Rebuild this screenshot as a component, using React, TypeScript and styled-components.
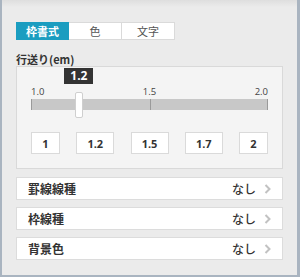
import React from "react";
import styled, { createGlobalStyle } from "styled-components";

const Global = createGlobalStyle`
  html, body { margin: 0; padding: 0; background: #ebebeb; }
  body { font-family: "Noto Sans CJK JP", "Noto Sans", sans-serif; }
`;

const Frame = styled.div`
  box-sizing: border-box;
  width: 300px;
  height: 277px;
  border-left: 2px solid #a9b4c0;
  border-right: 3px solid #a9b4c0;
  border-bottom: 2px solid #a9b4c0;
  background: linear-gradient(#dedede 0px, #ebebeb 7px);
  padding: 22px 12px 0 14px;
`;

const Tabs = styled.div`
  display: flex;
`;

const Tab = styled.div<{ $active?: boolean }>`
  box-sizing: border-box;
  width: 53px;
  height: 18px;
  display: flex;
  align-items: center;
  justify-content: center;
  font-size: 11px;
  font-weight: ${(p) => (p.$active ? 700 : 400)};
  color: ${(p) => (p.$active ? "#ffffff" : "#555")};
  background: ${(p) => (p.$active ? "#1b9dc0" : "#ffffff")};
  border: 1px solid ${(p) => (p.$active ? "#1b9dc0" : "#dadada")};
  & + & { border-left: none; }
`;

const Label = styled.div`
  margin-top: 12px;
  height: 14px;
  line-height: 14px;
  font-size: 11px;
  font-weight: 700;
  color: #333;
`;

const Panel = styled.div`
  box-sizing: border-box;
  width: 267px;
  background: #f4f4f4;
  border: 1px solid #d9d9d9;
  padding: 0 14px 14px 14px;
`;

const SliderBlock = styled.div`
  position: relative;
  padding-top: 19px;
`;

const Badge = styled.div`
  position: absolute;
  top: 1px;
  width: 29px;
  height: 16px;
  margin-left: -14.5px;
  background: #333333;
  color: #ffffff;
  font-size: 12px;
  font-weight: 700;
  line-height: 16px;
  text-align: center;
  font-family: "Open Sans", "Noto Sans", sans-serif;
`;

const Scale = styled.div`
  display: flex;
  justify-content: space-between;
  height: 12px;
  line-height: 12px;
  font-size: 9.5px;
  color: #444;
  font-family: "Open Sans", "Noto Sans", sans-serif;
`;

const ScaleText = styled.span<{ $align: string }>`
  width: 20px;
  text-align: ${(p) => p.$align};
`;

const Track = styled.div`
  position: relative;
  margin-top: 1px;
  height: 11px;
  background: #c8c8c8;
`;

const Tick = styled.div<{ $pos: string }>`
  position: absolute;
  top: 0;
  bottom: 0;
  width: 1px;
  background: #9a9a9a;
  left: ${(p) => p.$pos};
`;

const Thumb = styled.div`
  position: absolute;
  top: 25px;
  width: 8px;
  height: 26px;
  margin-left: -4px;
  box-sizing: border-box;
  background: #ffffff;
  border: 1px solid #cfcfcf;
  border-radius: 2px;
`;

const ButtonRow = styled.div`
  display: flex;
  justify-content: space-between;
  margin-top: 22px;
`;

const ValueButton = styled.div<{ $wide?: boolean }>`
  box-sizing: border-box;
  width: ${(p) => (p.$wide ? 38 : 29)}px;
  height: 22px;
  background: #ffffff;
  border: 1px solid #dadada;
  display: flex;
  align-items: center;
  justify-content: center;
  font-size: 11px;
  font-weight: 700;
  color: #333;
  font-family: "Open Sans", "Noto Sans", sans-serif;
`;

const List = styled.div`
  margin-top: 8px;
  display: flex;
  flex-direction: column;
  gap: 7px;
`;

const Row = styled.div`
  box-sizing: border-box;
  width: 267px;
  height: 23px;
  background: #ffffff;
  border: 1px solid #dcdcdc;
  display: flex;
  align-items: center;
  padding: 0 11px 0 11px;
  font-size: 12px;
  font-weight: 700;
  color: #333;
`;

const RowTitle = styled.span`
  flex: 1;
`;

const RowValue = styled.span`
  margin-right: 8px;
  font-weight: 500;
`;

const Chevron = () => (
  <svg width="7" height="10" viewBox="0 0 7 10">
    <polyline points="1.5,1 5.5,5 1.5,9" fill="none" stroke="#c2c2c2" strokeWidth="2" />
  </svg>
);

const values = ["1", "1.2", "1.5", "1.7", "2"];
const rows = ["罫線線種", "枠線種", "背景色"];

export default function App() {
  const value = 1.2;
  const pct = ((value - 1) / 1) * 100;
  return (
    <>
      <Global />
      <Frame>
        <Tabs>
          <Tab $active>枠書式</Tab>
          <Tab>色</Tab>
          <Tab>文字</Tab>
        </Tabs>
        <Label>行送り(em)</Label>
        <Panel>
          <SliderBlock>
            <Badge style={{ left: `calc(${pct}% + 0.5px)` }}>1.2</Badge>
            <Scale>
              <ScaleText $align="left">1.0</ScaleText>
              <ScaleText $align="center">1.5</ScaleText>
              <ScaleText $align="right">2.0</ScaleText>
            </Scale>
            <Track>
              <Tick $pos="0" />
              <Tick $pos="50%" />
              <Tick $pos="calc(100% - 1px)" />
            </Track>
            <Thumb style={{ left: `calc(${pct}% + 0.5px)` }} />
          </SliderBlock>
          <ButtonRow>
            {values.map((v) => (
              <ValueButton key={v} $wide={v.length > 1}>
                {v}
              </ValueButton>
            ))}
          </ButtonRow>
        </Panel>
        <List>
          {rows.map((r) => (
            <Row key={r}>
              <RowTitle>{r}</RowTitle>
              <RowValue>なし</RowValue>
              <Chevron />
            </Row>
          ))}
        </List>
      </Frame>
    </>
  );
}
